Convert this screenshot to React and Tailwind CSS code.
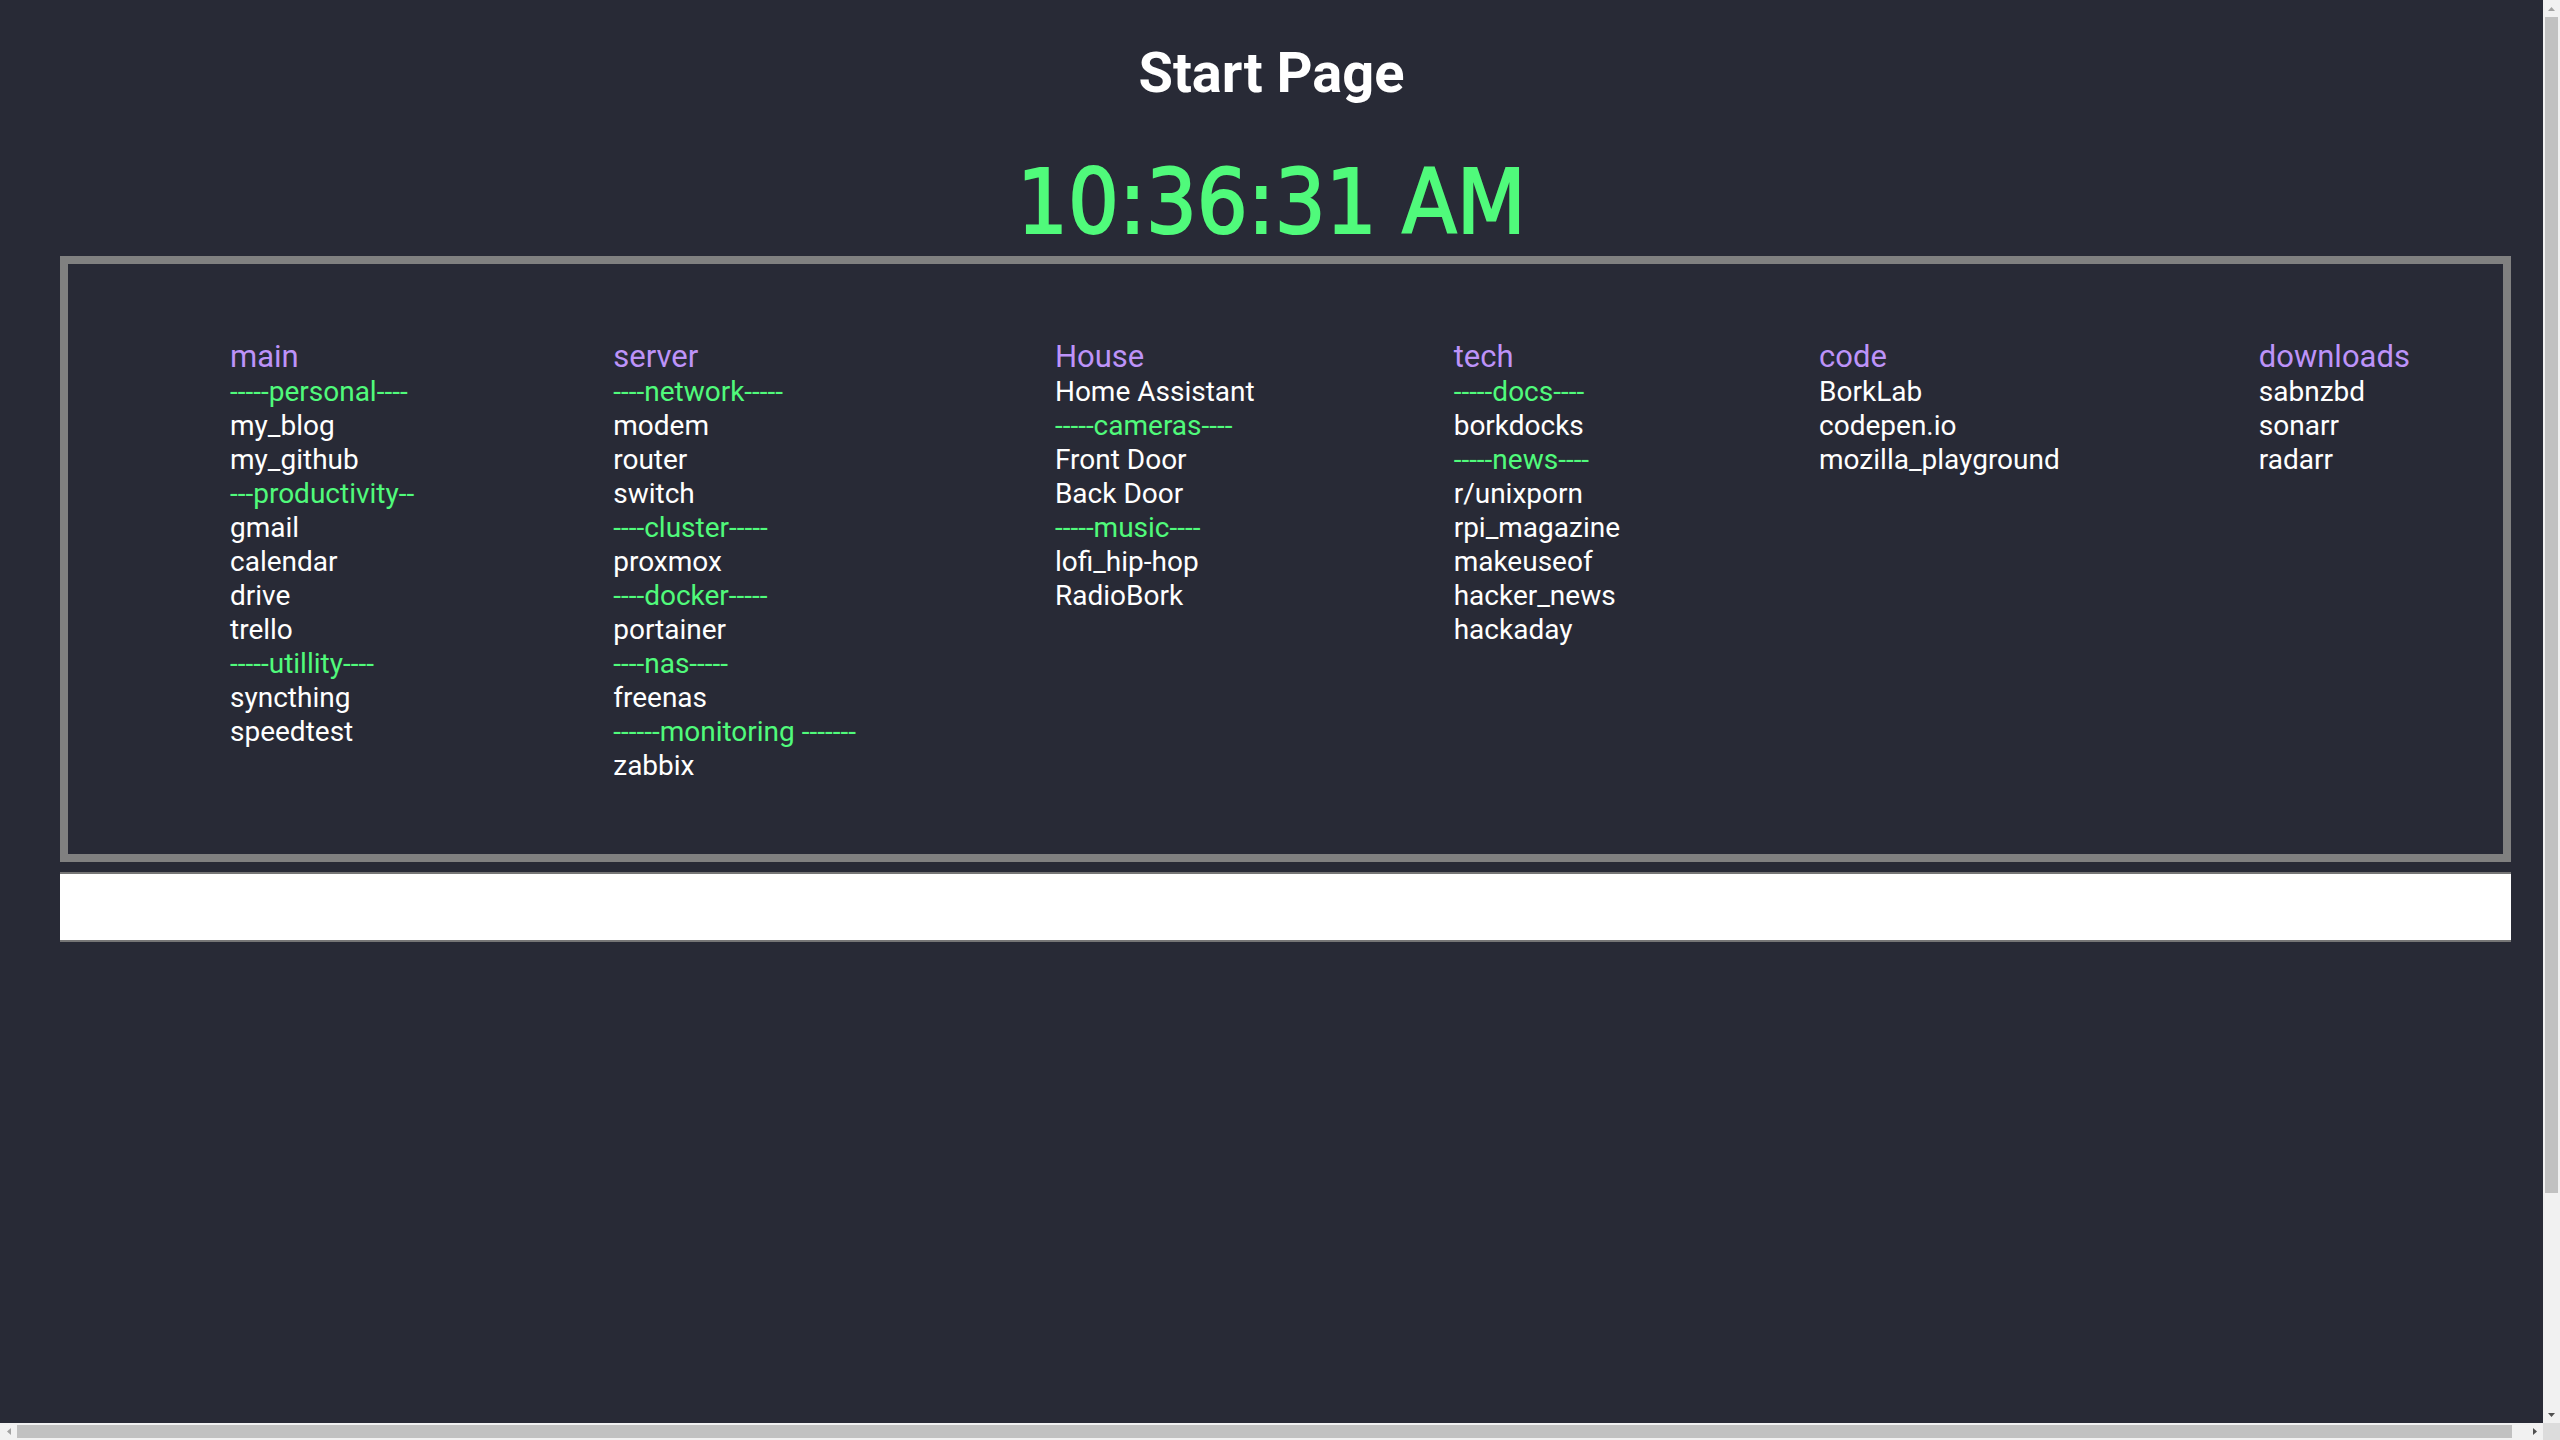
import React from "react";

// link columns, lines starting with "-" are the green group dividers
const columns = [
  {
    title: "main",
    items: [
      "-----personal----",
      "my_blog",
      "my_github",
      "---productivity--",
      "gmail",
      "calendar",
      "drive",
      "trello",
      "-----utillity----",
      "syncthing",
      "speedtest",
    ],
  },
  {
    title: "server",
    items: [
      "----network-----",
      "modem",
      "router",
      "switch",
      "----cluster-----",
      "proxmox",
      "----docker-----",
      "portainer",
      "----nas-----",
      "freenas",
      "------monitoring -------",
      "zabbix",
    ],
  },
  {
    title: "House",
    items: [
      "Home Assistant",
      "-----cameras----",
      "Front Door",
      "Back Door",
      "-----music----",
      "lofi_hip-hop",
      "RadioBork",
    ],
  },
  {
    title: "tech",
    items: [
      "-----docs----",
      "borkdocks",
      "-----news----",
      "r/unixporn",
      "rpi_magazine",
      "makeuseof",
      "hacker_news",
      "hackaday",
    ],
  },
  {
    title: "code",
    items: ["BorkLab", "codepen.io", "mozilla_playground"],
  },
  {
    title: "downloads",
    items: ["sabnzbd", "sonarr", "radarr"],
  },
];

const LinkColumn = ({ col }) => (
  <div className="flex flex-col">
    <h2 className="text-[31px] leading-[37px] text-[#bd93f9] whitespace-nowrap">{col.title}</h2>
    {col.items.map((item, i) =>
      item.startsWith("-") ? (
        <span key={i} className="text-[28px] leading-[34px] text-[#50fa7b] whitespace-pre">
          {item}
        </span>
      ) : (
        <a key={i} href="#" className="text-[28px] leading-[34px] text-white whitespace-nowrap">
          {item}
        </a>
      )
    )}
  </div>
);

// classic browser scrollbars drawn over the page edges
const Arrow = ({ dir, color }) => {
  const pts = {
    up: "3.5,0 7,4 0,4",
    down: "0,0 7,0 3.5,4",
    left: "4,0 4,7 0,3.5",
    right: "0,0 4,3.5 0,7",
  }[dir];
  const vertical = dir === "up" || dir === "down";
  return (
    <svg width={vertical ? 7 : 4} height={vertical ? 4 : 7} viewBox={vertical ? "0 0 7 4" : "0 0 4 7"}>
      <polygon points={pts} fill={color} />
    </svg>
  );
};

const Scrollbars = () => (
  <>
    <div className="absolute top-0 right-0 flex h-[1423px] w-[17px] flex-col bg-[#f1f1f1]">
      <div className="flex h-[17px] items-center justify-center">
        <Arrow dir="up" color="#a3a3a3" />
      </div>
      <div className="mx-[2px] h-[1176px] bg-[#c1c1c1]" />
      <div className="flex-1" />
      <div className="flex h-[17px] items-center justify-center">
        <Arrow dir="down" color="#505050" />
      </div>
    </div>
    <div className="absolute bottom-0 left-0 flex h-[17px] w-[2543px] items-center bg-[#f1f1f1]">
      <div className="flex h-[17px] w-[17px] items-center justify-center">
        <Arrow dir="left" color="#a3a3a3" />
      </div>
      <div className="h-[13px] w-[2495px] bg-[#c1c1c1]" />
      <div className="flex-1" />
      <div className="flex h-[17px] w-[17px] items-center justify-center">
        <Arrow dir="right" color="#505050" />
      </div>
    </div>
    <div className="absolute right-0 bottom-0 h-[17px] w-[17px] bg-[#dcdcdc]" />
  </>
);

export default function App() {
  return (
    <div className="relative h-screen w-screen overflow-hidden bg-[#282a36] font-['Roboto',sans-serif] text-white">
      <div className="w-[2543px] pt-[40px]">
        <h1 className="text-center text-[56px] font-bold leading-[66px]">Start Page</h1>

        <div className="mt-[44px] text-center font-['DejaVu_Sans_Condensed','DejaVu_Sans',sans-serif] text-[89px] leading-[104px] text-[#50fa7b] [font-stretch:condensed] [-webkit-text-stroke:2px_#50fa7b]">
          10:36:31 AM
        </div>

        <div className="mt-[2px] ml-[60px] w-[2451px] border-8 border-[#808080] pt-[74px] pb-[71px] pl-[162px]">
          <div className="flex items-start gap-[199px]">
            {columns.map((col) => (
              <LinkColumn key={col.title} col={col} />
            ))}
          </div>
        </div>

        <div className="mt-[10px] ml-[60px] h-[70px] w-[2451px] border-y-2 border-[#767676] bg-white" />
      </div>

      <Scrollbars />
    </div>
  );
}
